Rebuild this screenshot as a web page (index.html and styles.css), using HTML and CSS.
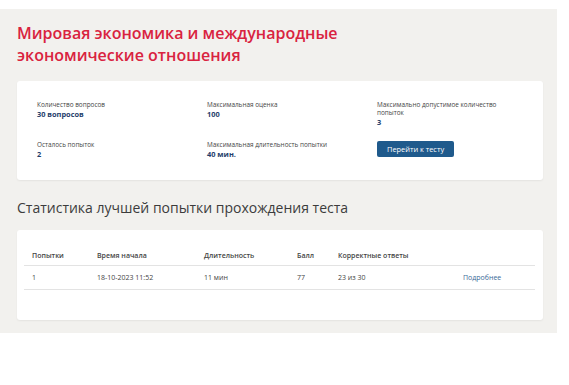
FILE: index.html
```html
<!DOCTYPE html>
<html lang="ru">
<head>
  <meta charset="UTF-8" />
  <title>Тест</title>
  <link rel="stylesheet" href="styles.css">
</head>
<body>
  <div class="page">
    <h1 class="title">Мировая экономика и международные<br>экономические отношения</h1>

    <div class="card info">
      <div class="info-item">
        <span class="label">Количество вопросов</span>
        <span class="value">30 вопросов</span>
      </div>
      <div class="info-item">
        <span class="label">Максимальная оценка</span>
        <span class="value">100</span>
      </div>
      <div class="info-item">
        <span class="label">Максимально допустимое количество попыток</span>
        <span class="value">3</span>
      </div>
      <div class="info-item">
        <span class="label">Осталось попыток</span>
        <span class="value">2</span>
      </div>
      <div class="info-item">
        <span class="label">Максимальная длительность попытки</span>
        <span class="value">40 мин.</span>
      </div>
      <div class="info-item">
        <button class="btn" type="button">Перейти к тесту</button>
      </div>
    </div>

    <h2 class="subtitle">Статистика лучшей попытки прохождения теста</h2>

    <div class="card stats">
      <table>
        <thead>
          <tr>
            <th class="c1">Попытки</th>
            <th class="c2">Время начала</th>
            <th class="c3">Длительность</th>
            <th class="c4">Балл</th>
            <th class="c5">Корректные ответы</th>
            <th></th>
          </tr>
        </thead>
        <tbody>
          <tr>
            <td>1</td>
            <td>18-10-2023 11:52</td>
            <td>11 мин</td>
            <td>77</td>
            <td>23 из 30</td>
            <td><a href="#">Подробнее</a></td>
          </tr>
        </tbody>
      </table>
    </div>
  </div>
</body>
</html>
```

FILE: styles.css
```css
* {
  box-sizing: border-box;
}

html, body {
  margin: 0;
  padding: 0;
  background: #ffffff;
  font-family: "Open Sans", "Noto Sans", sans-serif;
}

.page {
  width: 557px;
  margin-top: 9px;
  padding: 13px 14px 13px 17px;
  background: #f2f1ee;
}

.title {
  margin: 0 0 15px;
  font-size: 16px;
  line-height: 22px;
  font-weight: 600;
  color: #d9233f;
}

.card {
  background: #ffffff;
  border-radius: 3px;
  box-shadow: 0 1px 2px rgba(0, 0, 0, 0.06);
}

.info {
  display: grid;
  grid-template-columns: 170px 170px 1fr;
  row-gap: 14px;
  padding: 20px 20px 21px 20px;
}

.info-item {
  display: flex;
  flex-direction: column;
}

.label {
  font-size: 6.4px;
  line-height: 8px;
  color: #444;
  max-width: 125px;
}

.value {
  font-size: 7.4px;
  line-height: 10px;
  font-weight: 700;
  color: #1f3e6b;
}

.btn {
  align-self: flex-start;
  padding: 0 10px;
  height: 16px;
  border: none;
  border-radius: 2px;
  background: #1f5a8c;
  color: #ffffff;
  font-family: inherit;
  font-size: 7.4px;
  cursor: pointer;
}

.subtitle {
  margin: 18px 0 12px;
  font-size: 14px;
  line-height: 20px;
  font-weight: 400;
  color: #3c3c3c;
}

.stats {
  padding: 15px 8px 30px 7px;
}

table {
  width: 100%;
  border-collapse: collapse;
  font-size: 7px;
  color: #444;
}

th {
  text-align: left;
  font-weight: 600;
  padding: 6px 8px 5px;
  border-bottom: 1px solid #e3e3e3;
}

td {
  padding: 7px 8px;
  border-bottom: 1px solid #e3e3e3;
}

.c1 { width: 65px; }
.c2 { width: 107px; }
.c3 { width: 93px; }
.c4 { width: 41px; }
.c5 { width: 125px; }

a {
  color: #3a6a98;
  text-decoration: none;
}
```
